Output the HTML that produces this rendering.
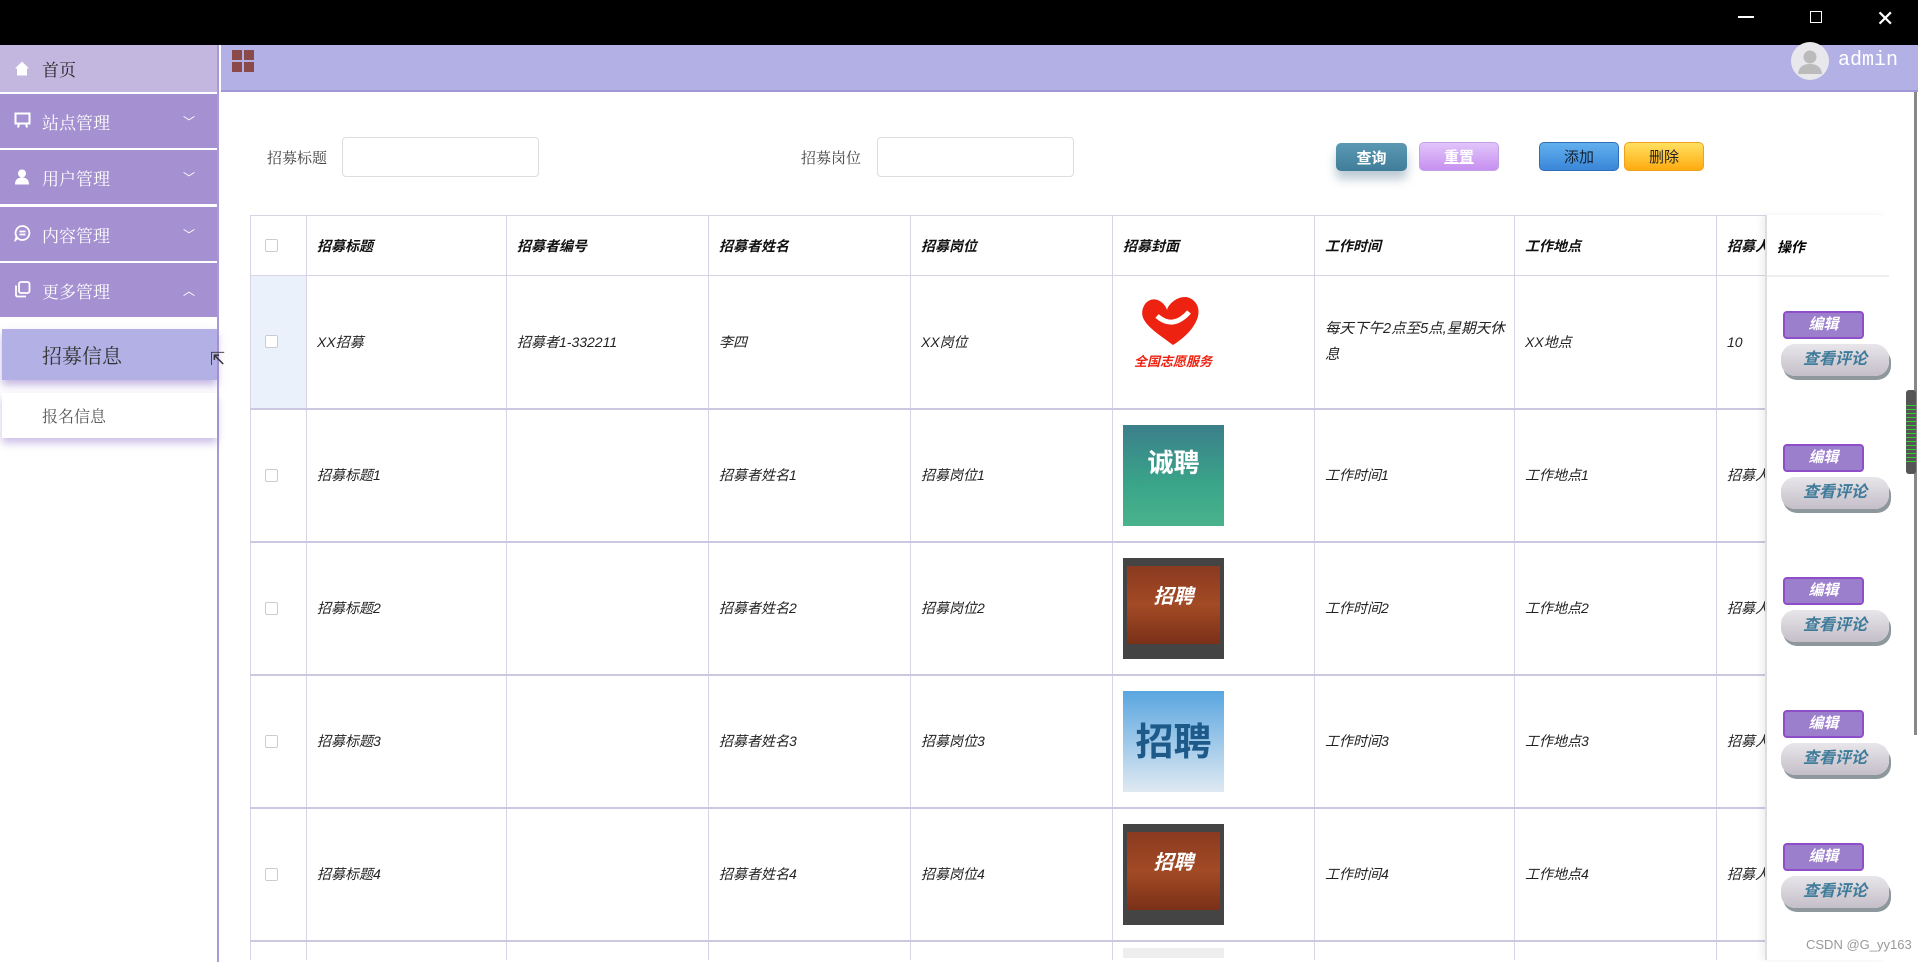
<!DOCTYPE html>
<html><head><meta charset="utf-8">
<style>
*{margin:0;padding:0;box-sizing:border-box}
html,body{width:1918px;height:962px;overflow:hidden}
body{background:#fff;position:relative;font-family:"Liberation Sans","Noto Sans CJK SC",sans-serif}
.a{position:absolute}
.top{left:0;top:0;width:1918px;height:45px;background:#000}
.side{left:0;top:45px;width:219px;height:917px;background:#fff;border-right:2px solid #a89ad6}
.mi{position:absolute;left:0;width:217px;background:#a591d1;color:#fff;font-family:"Noto Serif CJK SC",serif;font-size:17px;padding-left:42px;display:flex;align-items:center}
.mi .ic{position:absolute;left:14px;top:50%;transform:translateY(-50%)}
.mi .ar{position:absolute;right:22px;font-size:12px;font-family:"DejaVu Sans",sans-serif}
.hdr{left:221px;top:45px;width:1697px;height:47px;background:#b3b0e5;border-bottom:2px solid #a396d8}
.lbl{font-family:"Noto Serif CJK SC",serif;font-size:15px;color:#444}
.inp{border:1px solid #ddd;border-radius:4px;background:#fff}
.btn{border-radius:5px;font-size:15px;font-weight:bold;display:flex;align-items:center;justify-content:center}
.tw{position:absolute;left:250px;top:215px;width:1520px;height:745px;overflow:hidden}
table{border-collapse:collapse;table-layout:fixed;width:1520px}
td{border:1.5px solid #d8d4e6;font-style:italic;font-size:14px;color:#222;padding-left:10px;padding-right:6px;vertical-align:middle;white-space:nowrap;overflow:hidden}
td.w{white-space:normal;line-height:26px;font-size:14.5px;padding-right:2px}
tr.h td{font-weight:bold;color:#111;height:60px;font-size:14px}
tr.r td{height:133px;border-bottom:2px solid #cdc8e2}
tr.e td{height:20px;border-bottom:none}
.cb{width:13px;height:13px;border:1px solid #ccc;border-radius:2px;background:#fff;margin-left:4px}
.op{left:1765px;top:215px;width:122px;height:745px;background:#fff;border-left:2px solid #ddd;box-shadow:-4px 0 6px rgba(0,0,0,.06)}
.ed{position:absolute;left:16px;width:81px;height:28px;background:#9c7fcc;border:2px solid #8e4ec8;border-radius:4px;color:#fff;font-weight:bold;font-style:italic;font-size:15px;text-align:center;line-height:24px}
.ck{position:absolute;left:14px;width:108px;height:32px;background:linear-gradient(#e8e6ea,#c4bec8);border-radius:14px;box-shadow:2px 4px 0 #8e989c;color:#3f7b9a;font-weight:bold;font-style:italic;font-size:16px;text-align:center;line-height:32px}
</style></head><body>
<div class="a top"></div>
<div class="a" style="left:1738px;top:16px;width:16px;height:1.5px;background:#fff"></div>
<div class="a" style="left:1810px;top:11px;width:12px;height:12px;border:1.5px solid #fff"></div>
<div class="a" style="left:1876px;top:7px;color:#fff;font-size:22px;font-family:'DejaVu Sans'">✕</div>

<div class="a side">
  <div class="mi" style="top:0;height:47px;background:#c3b7e0;color:#222"><span class="ic"><svg width="16" height="16" viewBox="0 0 16 16"><path d="M8 1 L15 8 L13 8 L13 15 L3 15 L3 8 L1 8Z" fill="#fff"/></svg></span>首页</div>
  <div class="mi" style="top:49px;height:54px"><span class="ic"><svg width="17" height="17" viewBox="0 0 17 17" fill="none" stroke="#fff" stroke-width="2"><rect x="1.5" y="2" width="14" height="10"/><path d="M5 12 L4 16 M12 12 L13 16"/></svg></span>站点管理<span class="ar">﹀</span></div>
  <div class="mi" style="top:105px;height:54px"><span class="ic"><svg width="16" height="16" viewBox="0 0 16 16" fill="#fff"><circle cx="8" cy="5" r="4"/><path d="M1 16 Q1 9 8 9 Q15 9 15 16Z"/></svg></span>用户管理<span class="ar">﹀</span></div>
  <div class="mi" style="top:162px;height:54px"><span class="ic"><svg width="17" height="17" viewBox="0 0 17 17" fill="none" stroke="#fff" stroke-width="1.8"><path d="M8.5 1.5a7 7 0 1 1-5 12l-2 2 1-3.5a7 7 0 0 1 6-10.5z"/><path d="M5.5 7h6M5.5 10h6"/></svg></span>内容管理<span class="ar">﹀</span></div>
  <div class="mi" style="top:218px;height:54px"><span class="ic"><svg width="17" height="17" viewBox="0 0 17 17" fill="none" stroke="#fff" stroke-width="1.8"><rect x="5" y="1.5" width="10.5" height="11" rx="2"/><path d="M2 5v9.5a1.5 1.5 0 0 0 1.5 1.5H12"/></svg></span>更多管理<span class="ar">︿</span></div>
  <div class="a" style="left:2px;top:284px;width:215px;height:51px;background:#b3b0e5;box-shadow:0 5px 8px rgba(140,110,200,.5);font-family:'Noto Serif CJK SC',serif;font-size:20px;color:#333;padding-left:40px;line-height:51px">招募信息</div>
  <div class="a" style="left:2px;top:348px;width:215px;height:45px;background:#fff;box-shadow:0 5px 8px rgba(140,110,200,.45);font-family:'Noto Serif CJK SC',serif;font-size:16px;color:#555;padding-left:40px;line-height:45px">报名信息</div>
</div>
<div class="a" style="left:210px;top:349px;font-size:18px;color:#333">⇱</div>

<div class="a hdr"></div>
<div class="a" style="left:232px;top:50px;width:22px;height:22px;display:grid;grid-template-columns:10px 10px;gap:2px">
<i style="background:#8a4a4a"></i><i style="background:#8a4a4a"></i><i style="background:#8a4a4a"></i><i style="background:#8a4a4a"></i></div>
<div class="a" style="left:1791px;top:42px;width:38px;height:38px;border-radius:50%;background:#e8e8ec;overflow:hidden"><svg width="38" height="38"><circle cx="19" cy="15" r="6.5" fill="#bbb"/><path d="M7 32 Q8 22 19 22 Q30 22 31 32Z" fill="#bbb"/></svg></div>
<div class="a" style="left:1838px;top:49px;color:#fff;font-family:'Liberation Mono',monospace;font-size:20px">admin</div>
<div class="a" style="left:1914px;top:92px;width:3px;height:643px;background:#888"></div>
<div class="a" style="left:1906px;top:390px;width:10px;height:84px;background:#555;border-radius:3px;background-image:repeating-linear-gradient(#555 0 3px,#3c3 3px 4px);background-size:100% 60px;background-position:0 12px;background-repeat:no-repeat"></div>

<div class="a lbl" style="left:267px;top:147px">招募标题</div>
<div class="a inp" style="left:342px;top:137px;width:197px;height:40px"></div>
<div class="a lbl" style="left:801px;top:147px">招募岗位</div>
<div class="a inp" style="left:877px;top:137px;width:197px;height:40px"></div>
<div class="a btn" style="left:1336px;top:143px;width:71px;height:28px;background:linear-gradient(#5a98b3,#3f7d98);color:#fff;box-shadow:0 8px 10px rgba(60,100,130,.35)">查询</div>
<div class="a btn" style="left:1419px;top:142px;width:80px;height:29px;background:linear-gradient(#e2c4fa,#c690f0);color:#fff;text-decoration:underline;border:1px solid #c4a0e6">重置</div>
<div class="a btn" style="left:1539px;top:142px;width:80px;height:29px;background:linear-gradient(#62b0ee,#3a86d8);color:#123;font-weight:normal;border:1px solid #2f6fb8">添加</div>
<div class="a btn" style="left:1624px;top:142px;width:80px;height:29px;background:linear-gradient(#ffe060,#ffab10);color:#222;font-weight:normal;border:1px solid #f0a020">删除</div>

<div class="tw">
<table>
<colgroup><col style="width:56px"><col style="width:200px"><col style="width:202px"><col style="width:202px"><col style="width:202px"><col style="width:202px"><col style="width:200px"><col style="width:202px"><col style="width:54px"></colgroup>
<tr class="h"><td><div class="cb"></div></td><td>招募标题</td><td>招募者编号</td><td>招募者姓名</td><td>招募岗位</td><td>招募封面</td><td>工作时间</td><td>工作地点</td><td>招募人数</td></tr>
<tr class="r"><td style="background:#eaf1fb"><div class="cb"></div></td><td>XX招募</td><td>招募者1-332211</td><td>李四</td><td>XX岗位</td><td><svg width="100" height="100" viewBox="0 0 100 100"><path d="M50 55 C30 40 12 30 22 14 C30 4 42 12 44 20 C46 12 60 2 70 10 C82 20 74 40 50 55Z" fill="#e21"/><path d="M34 26 Q50 40 66 22" stroke="#fff" stroke-width="5" fill="none"/><text x="50" y="76" text-anchor="middle" font-size="13" font-weight="bold" fill="#e21" font-family="Noto Sans CJK SC">全国志愿服务</text></svg></td><td class="w">每天下午2点至5点,星期天休息</td><td>XX地点</td><td>10</td></tr>
<tr class="r"><td><div class="cb"></div></td><td>招募标题1</td><td></td><td>招募者姓名1</td><td>招募岗位1</td><td><div style="width:101px;height:101px;background:linear-gradient(#3b7f8a,#3aa589 60%,#4ab38c);color:#fff;font-size:26px;font-weight:bold;text-align:center;padding-top:18px;font-style:normal">诚聘</div></td><td>工作时间1</td><td>工作地点1</td><td>招募人数</td></tr>
<tr class="r"><td><div class="cb"></div></td><td>招募标题2</td><td></td><td>招募者姓名2</td><td>招募岗位2</td><td><div style="width:101px;height:101px;background:#444;padding:8px 4px"><div style="height:78px;background:linear-gradient(#8a3a20,#a34a25,#7a3018);color:#fff;font-size:20px;font-weight:bold;text-align:center;padding-top:14px">招聘</div></div></td><td>工作时间2</td><td>工作地点2</td><td>招募人数</td></tr>
<tr class="r"><td><div class="cb"></div></td><td>招募标题3</td><td></td><td>招募者姓名3</td><td>招募岗位3</td><td><div style="width:101px;height:101px;background:linear-gradient(#5aa6e0,#dfe9f2);color:#1d5a8a;font-size:38px;font-weight:bold;text-align:center;padding-top:20px;font-style:normal">招聘</div></td><td>工作时间3</td><td>工作地点3</td><td>招募人数</td></tr>
<tr class="r"><td><div class="cb"></div></td><td>招募标题4</td><td></td><td>招募者姓名4</td><td>招募岗位4</td><td><div style="width:101px;height:101px;background:#444;padding:8px 4px"><div style="height:78px;background:linear-gradient(#8a3a20,#a34a25,#7a3018);color:#fff;font-size:20px;font-weight:bold;text-align:center;padding-top:14px">招聘</div></div></td><td>工作时间4</td><td>工作地点4</td><td>招募人数</td></tr>
<tr class="e"><td></td><td></td><td></td><td></td><td></td><td><div style="width:101px;height:10px;background:#eee;margin-top:4px"></div></td><td></td><td></td><td></td></tr>
</table>
</div>

<div class="a op">
  <div class="a" style="left:10px;top:22px;font-weight:bold;font-style:italic;font-size:14px">操作</div>
  <div class="a" style="left:0;top:60px;width:122px;height:1.5px;background:#eee"></div>
  <div class="ed" style="top:96px">编辑</div><div class="ck" style="top:129px">查看评论</div>
  <div class="ed" style="top:229px">编辑</div><div class="ck" style="top:262px">查看评论</div>
  <div class="ed" style="top:362px">编辑</div><div class="ck" style="top:395px">查看评论</div>
  <div class="ed" style="top:495px">编辑</div><div class="ck" style="top:528px">查看评论</div>
  <div class="ed" style="top:628px">编辑</div><div class="ck" style="top:661px">查看评论</div>
</div>
<div class="a" style="left:1806px;top:937px;font-size:13px;color:#999">CSDN @G_yy163</div>
</body></html>
